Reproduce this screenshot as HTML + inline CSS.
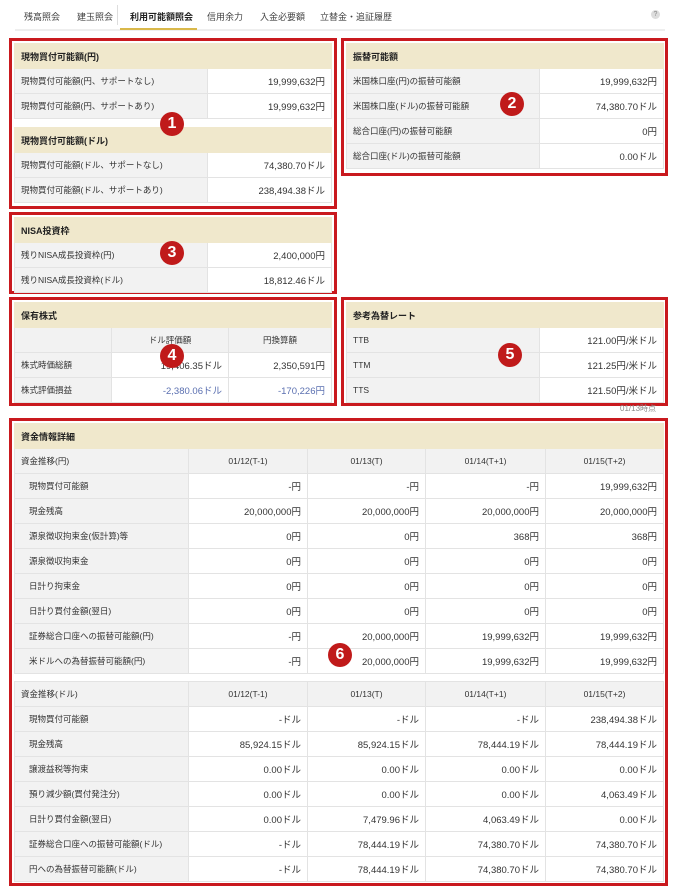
<!DOCTYPE html>
<html><head><meta charset="utf-8"><style>
*{margin:0;padding:0;box-sizing:border-box}
body{width:680px;height:888px;background:#fff;font-family:"Liberation Sans","Noto Sans CJK JP",sans-serif;font-size:9px;color:#333;position:relative;overflow:hidden}
.tabs{position:absolute;left:15px;top:0;width:650px;height:31px;border-bottom:2px solid #eee}
.tab{position:absolute;top:10px;font-size:9px;color:#444}
.act{font-weight:bold;color:#222}
.ul{position:absolute;left:120px;top:28px;width:77px;height:2px;background:#d9b84a}
.box{position:absolute;border:3px solid #c9191e}
table{border-collapse:collapse;position:absolute;table-layout:fixed}
td,th{border:1px solid #e3e3e3;height:25px;padding:0 6px;font-weight:normal;white-space:nowrap;font-size:8.5px}
.h td{background:#f0e8cc;font-weight:bold;font-size:9px;color:#222;border-color:#f0e8cc}
.l{background:#f2f2f2;text-align:left}
.v{background:#fff;text-align:right;font-size:9.5px}
.s td{background:#f2f2f2;text-align:center}
.s td:first-child{text-align:left}
.ind{padding-left:14px}
.blue{color:#5a6fb0}
.b{position:absolute;width:24px;height:24px;border-radius:50%;background:#c01a1a;color:#fff;font-weight:bold;font-size:16px;text-align:center;line-height:24px;font-family:"Liberation Sans",sans-serif}
</style></head><body>
<div class="tabs">
<span class="tab" style="left:9px">残高照会</span>
<span class="tab" style="left:62px">建玉照会</span>
<span style="position:absolute;left:102px;top:5px;width:1px;height:20px;background:#ddd"></span>
<span class="tab act" style="left:115px">利用可能額照会</span>
<span class="tab" style="left:192px">信用余力</span>
<span class="tab" style="left:245px">入金必要額</span>
<span class="tab" style="left:305px">立替金・追証履歴</span>
<span style="position:absolute;left:636px;top:10px;width:9px;height:9px;border-radius:50%;background:#ddd;color:#888;font-size:7px;text-align:center;line-height:9px">?</span>
</div>
<div class="ul"></div>

<div class="box" style="left:9px;top:38px;width:328px;height:171px">
<table style="left:2px;top:2px;width:318px">
<col style="width:193px"><col>
<tr class="h"><td colspan="2">現物買付可能額(円)</td></tr>
<tr><td class="l">現物買付可能額(円、サポートなし)</td><td class="v">19,999,632円</td></tr>
<tr><td class="l">現物買付可能額(円、サポートあり)</td><td class="v">19,999,632円</td></tr>
</table>
<table style="left:2px;top:86px;width:318px">
<col style="width:193px"><col>
<tr class="h"><td colspan="2">現物買付可能額(ドル)</td></tr>
<tr><td class="l">現物買付可能額(ドル、サポートなし)</td><td class="v">74,380.70ドル</td></tr>
<tr><td class="l">現物買付可能額(ドル、サポートあり)</td><td class="v">238,494.38ドル</td></tr>
</table>
</div>

<div class="box" style="left:341px;top:38px;width:327px;height:138px">
<table style="left:2px;top:2px;width:318px">
<col style="width:193px"><col>
<tr class="h"><td colspan="2">振替可能額</td></tr>
<tr><td class="l">米国株口座(円)の振替可能額</td><td class="v">19,999,632円</td></tr>
<tr><td class="l">米国株口座(ドル)の振替可能額</td><td class="v">74,380.70ドル</td></tr>
<tr><td class="l">総合口座(円)の振替可能額</td><td class="v">0円</td></tr>
<tr><td class="l">総合口座(ドル)の振替可能額</td><td class="v">0.00ドル</td></tr>
</table>
</div>

<div class="box" style="left:9px;top:212px;width:328px;height:82px">
<table style="left:2px;top:2px;width:318px">
<col style="width:193px"><col>
<tr class="h"><td colspan="2">NISA投資枠</td></tr>
<tr><td class="l">残りNISA成長投資枠(円)</td><td class="v">2,400,000円</td></tr>
<tr><td class="l">残りNISA成長投資枠(ドル)</td><td class="v">18,812.46ドル</td></tr>
</table>
</div>

<div class="box" style="left:9px;top:297px;width:328px;height:109px">
<table style="left:2px;top:2px;width:318px">
<col style="width:97px"><col style="width:117px"><col>
<tr class="h"><td colspan="3">保有株式</td></tr>
<tr class="s"><td></td><td>ドル評価額</td><td>円換算額</td></tr>
<tr><td class="l">株式時価総額</td><td class="v">19,406.35ドル</td><td class="v">2,350,591円</td></tr>
<tr><td class="l">株式評価損益</td><td class="v blue">-2,380.06ドル</td><td class="v blue">-170,226円</td></tr>
</table>
</div>

<div class="box" style="left:341px;top:297px;width:327px;height:109px">
<table style="left:2px;top:2px;width:318px">
<col style="width:193px"><col>
<tr class="h"><td colspan="2">参考為替レート</td></tr>
<tr><td class="l">TTB</td><td class="v">121.00円/米ドル</td></tr>
<tr><td class="l">TTM</td><td class="v">121.25円/米ドル</td></tr>
<tr><td class="l">TTS</td><td class="v">121.50円/米ドル</td></tr>
</table>
</div>
<div style="position:absolute;left:620px;top:403px;font-size:8px;color:#888">01/13時点</div>

<div class="box" style="left:9px;top:418px;width:659px;height:468px">
<table style="left:2px;top:2px;width:650px">
<col style="width:174px"><col style="width:119px"><col style="width:118px"><col style="width:120px"><col>
<tr class="h"><td colspan="5">資金情報詳細</td></tr>
<tr class="s" style="height:24px"><td>資金推移(円)</td><td>01/12(T-1)</td><td>01/13(T)</td><td>01/14(T+1)</td><td>01/15(T+2)</td></tr>
<tr><td class="l ind">現物買付可能額</td><td class="v">-円</td><td class="v">-円</td><td class="v">-円</td><td class="v">19,999,632円</td></tr>
<tr><td class="l ind">現金残高</td><td class="v">20,000,000円</td><td class="v">20,000,000円</td><td class="v">20,000,000円</td><td class="v">20,000,000円</td></tr>
<tr><td class="l ind">源泉徴収拘束金(仮計算)等</td><td class="v">0円</td><td class="v">0円</td><td class="v">368円</td><td class="v">368円</td></tr>
<tr><td class="l ind">源泉徴収拘束金</td><td class="v">0円</td><td class="v">0円</td><td class="v">0円</td><td class="v">0円</td></tr>
<tr><td class="l ind">日計り拘束金</td><td class="v">0円</td><td class="v">0円</td><td class="v">0円</td><td class="v">0円</td></tr>
<tr><td class="l ind">日計り買付金額(翌日)</td><td class="v">0円</td><td class="v">0円</td><td class="v">0円</td><td class="v">0円</td></tr>
<tr><td class="l ind">証券総合口座への振替可能額(円)</td><td class="v">-円</td><td class="v">20,000,000円</td><td class="v">19,999,632円</td><td class="v">19,999,632円</td></tr>
<tr><td class="l ind">米ドルへの為替振替可能額(円)</td><td class="v">-円</td><td class="v">20,000,000円</td><td class="v">19,999,632円</td><td class="v">19,999,632円</td></tr>
</table>
<table style="left:2px;top:260px;width:650px">
<col style="width:174px"><col style="width:119px"><col style="width:118px"><col style="width:120px"><col>
<tr class="s" style="height:24px"><td>資金推移(ドル)</td><td>01/12(T-1)</td><td>01/13(T)</td><td>01/14(T+1)</td><td>01/15(T+2)</td></tr>
<tr><td class="l ind">現物買付可能額</td><td class="v">-ドル</td><td class="v">-ドル</td><td class="v">-ドル</td><td class="v">238,494.38ドル</td></tr>
<tr><td class="l ind">現金残高</td><td class="v">85,924.15ドル</td><td class="v">85,924.15ドル</td><td class="v">78,444.19ドル</td><td class="v">78,444.19ドル</td></tr>
<tr><td class="l ind">譲渡益税等拘束</td><td class="v">0.00ドル</td><td class="v">0.00ドル</td><td class="v">0.00ドル</td><td class="v">0.00ドル</td></tr>
<tr><td class="l ind">預り減少額(買付発注分)</td><td class="v">0.00ドル</td><td class="v">0.00ドル</td><td class="v">0.00ドル</td><td class="v">4,063.49ドル</td></tr>
<tr><td class="l ind">日計り買付金額(翌日)</td><td class="v">0.00ドル</td><td class="v">7,479.96ドル</td><td class="v">4,063.49ドル</td><td class="v">0.00ドル</td></tr>
<tr><td class="l ind">証券総合口座への振替可能額(ドル)</td><td class="v">-ドル</td><td class="v">78,444.19ドル</td><td class="v">74,380.70ドル</td><td class="v">74,380.70ドル</td></tr>
<tr><td class="l ind">円への為替振替可能額(ドル)</td><td class="v">-ドル</td><td class="v">78,444.19ドル</td><td class="v">74,380.70ドル</td><td class="v">74,380.70ドル</td></tr>
</table>
</div>

<div class="b" style="left:160px;top:112px">1</div>
<div class="b" style="left:500px;top:92px">2</div>
<div class="b" style="left:160px;top:241px">3</div>
<div class="b" style="left:160px;top:344px">4</div>
<div class="b" style="left:498px;top:343px">5</div>
<div class="b" style="left:328px;top:643px">6</div>
</body></html>
